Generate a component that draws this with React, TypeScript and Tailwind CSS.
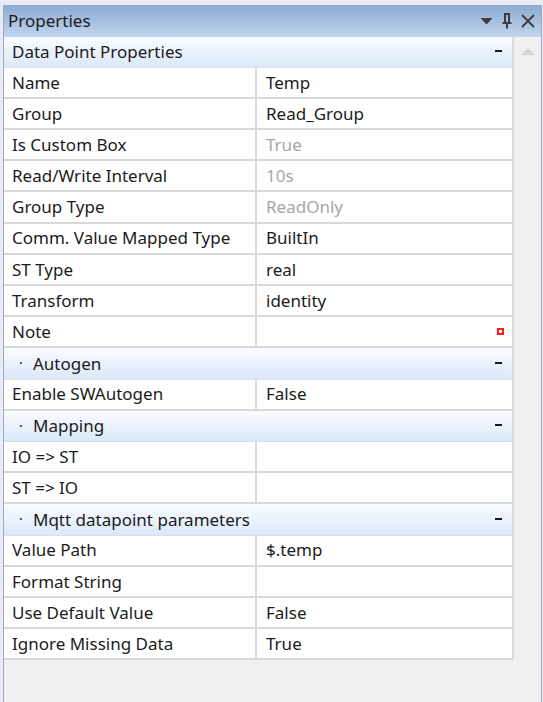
import React from 'react';

type Row = { name: string; value?: string; dim?: boolean; marker?: boolean };
type Section = { title: string; dot?: boolean; rows: Row[] };

const sections: Section[] = [
  {
    title: 'Data Point Properties',
    rows: [
      { name: 'Name', value: 'Temp' },
      { name: 'Group', value: 'Read_Group' },
      { name: 'Is Custom Box', value: 'True', dim: true },
      { name: 'Read/Write Interval', value: '10s', dim: true },
      { name: 'Group Type', value: 'ReadOnly', dim: true },
      { name: 'Comm. Value Mapped Type', value: 'BuiltIn' },
      { name: 'ST Type', value: 'real' },
      { name: 'Transform', value: 'identity' },
      { name: 'Note', marker: true },
    ],
  },
  { title: 'Autogen', dot: true, rows: [{ name: 'Enable SWAutogen', value: 'False' }] },
  {
    title: 'Mapping',
    dot: true,
    rows: [{ name: 'IO => ST' }, { name: 'ST => IO' }],
  },
  {
    title: 'Mqtt datapoint parameters',
    dot: true,
    rows: [
      { name: 'Value Path', value: '$.temp' },
      { name: 'Format String' },
      { name: 'Use Default Value', value: 'False' },
      { name: 'Ignore Missing Data', value: 'True' },
    ],
  },
];

function SectionHeader({ title, dot }: { title: string; dot?: boolean }) {
  return (
    <div className="flex h-[31.2px] items-center border-b border-[#d6dfeb] bg-gradient-to-b from-[#fafcff] to-[#dbe8f8] pr-[10px]">
      {dot ? (
        <>
          <span className="w-[29px] pl-[15px] text-[14px] leading-none">·</span>
          <span className="flex-1">{title}</span>
        </>
      ) : (
        <span className="flex-1 pl-[8px]">{title}</span>
      )}
      <span className="mb-[1px] h-[2px] w-[7px] bg-[#1a1a1a]" />
    </div>
  );
}

function PropRow({ row }: { row: Row }) {
  return (
    <div className="flex h-[31.2px] border-b-2 border-[#d9d9d9] bg-white">
      <div className="flex w-[253px] items-center border-r-2 border-[#d9d9d9] pl-[8px]">{row.name}</div>
      <div className={`flex flex-1 items-center pl-[9px] pr-[8px] ${row.dim ? 'text-[#a6a6a6]' : ''}`}>
        <span className="flex-1">{row.value}</span>
        {row.marker && <span className="h-[7px] w-[7px] border-2 border-[#ff1a1a] bg-white" />}
      </div>
    </div>
  );
}

export default function App() {
  return (
    <div
      className="flex h-[702px] w-[543px] flex-col bg-[#e9ebf7] pt-[5px] text-[17px] text-[#1b1b1b]"
      style={{ fontFamily: '"Noto Sans", "Open Sans", sans-serif' }}
    >
      <div className="ml-[3px] mr-[1px] flex flex-1 flex-col border-l border-r border-[#9ba7c4] bg-[#f0f0f0]">
        <div className="flex h-[31.5px] items-center bg-gradient-to-b from-[#8eaad2] to-[#c1d5ee] pl-[4px] pr-[6px]">
          <span className="flex-1">Properties</span>
          <svg width="13" height="8" viewBox="0 0 13 8" className="mr-[8px]">
            <path d="M0.5 1 L12.5 1 L6.5 7.5 Z" fill="#3c3c3c" />
          </svg>
          <svg width="12" height="16" viewBox="0 0 12 16" className="mr-[8px]">
            <path d="M3 1 H9 M4 1 V10 M8 1 V10 M1.5 10 H10.5 M6 10 V15.5" stroke="#3c3c3c" strokeWidth="2" fill="none" />
          </svg>
          <svg width="14" height="14" viewBox="0 0 14 14">
            <path d="M1 1 L13 13 M13 1 L1 13" stroke="#3c3c3c" strokeWidth="1.8" />
          </svg>
        </div>
        <div className="flex">
          <div className="w-[510px] border-r-2 border-[#d9d9d9]">
            {sections.map((s) => (
              <div key={s.title}>
                <SectionHeader title={s.title} dot={s.dot} />
                {s.rows.map((r) => (
                  <PropRow key={r.name} row={r} />
                ))}
              </div>
            ))}
          </div>
          <div className="flex flex-1 justify-center pt-[11px]">
            <svg width="14" height="7" viewBox="0 0 14 7">
              <path d="M0 7 L7 0 L14 7 Z" fill="#d6d6d6" />
            </svg>
          </div>
        </div>
      </div>
    </div>
  );
}
